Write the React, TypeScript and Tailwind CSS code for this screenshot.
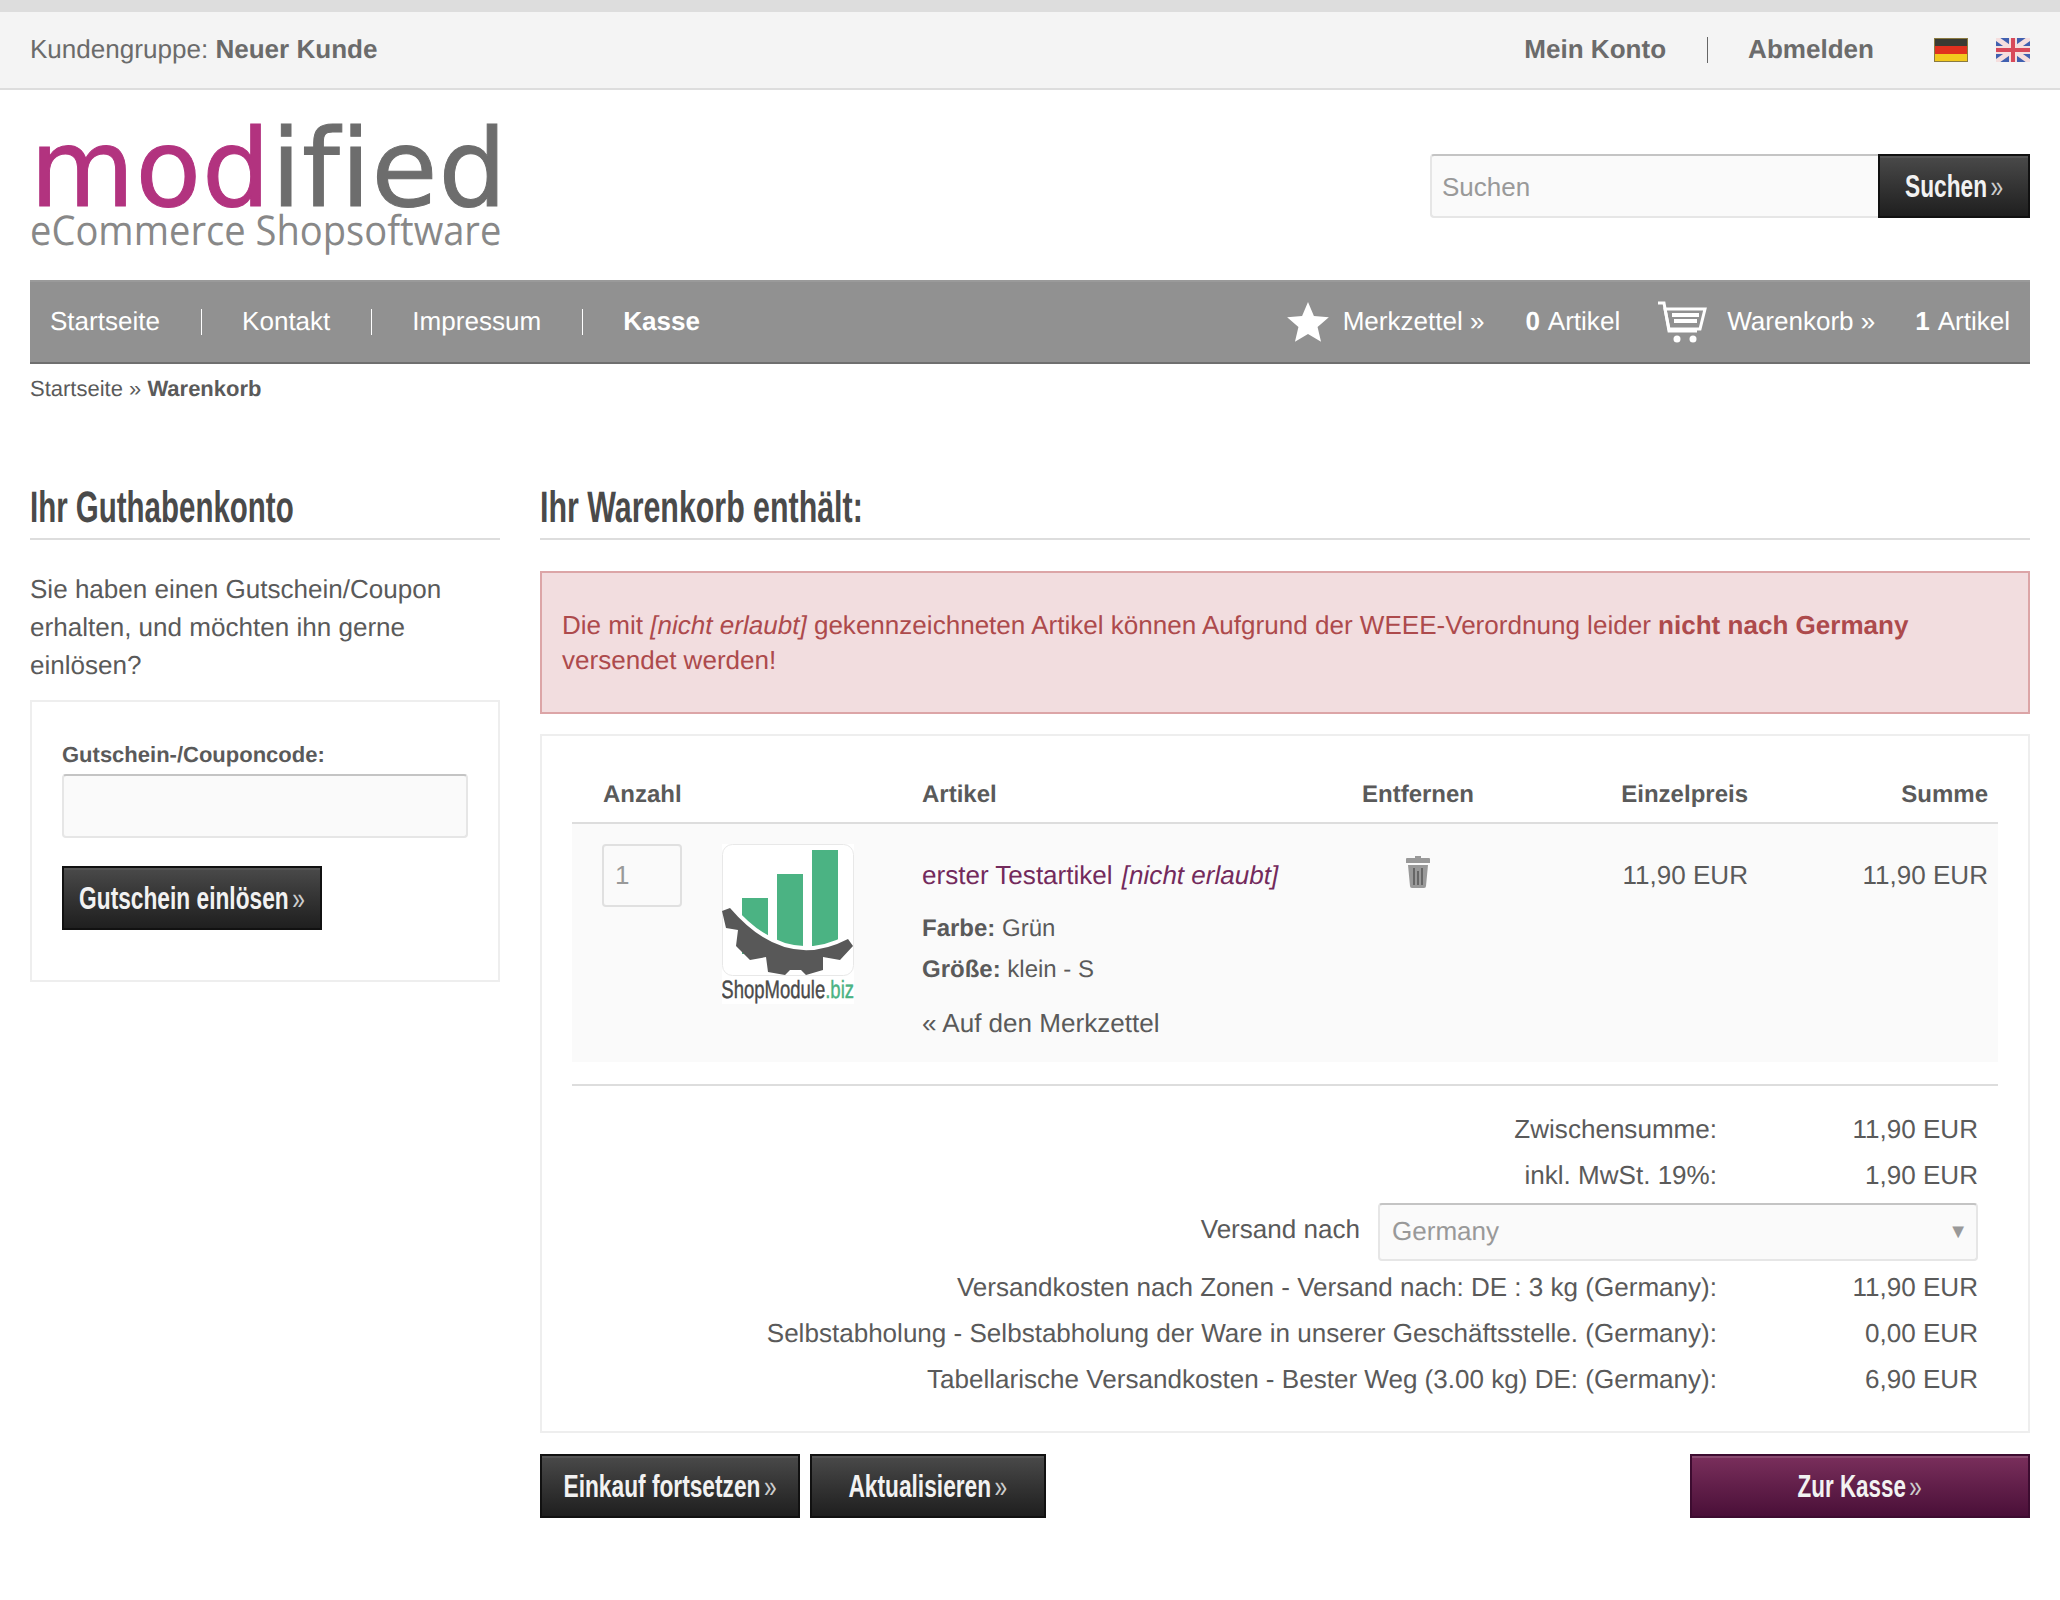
const DarkButton = ({ label, className = "" }: { label: string; className?: string }) => (
  <button
    className={`flex h-[64px] items-center justify-center overflow-hidden whitespace-nowrap border-2 border-[#111] bg-gradient-to-b from-[#4a4a4a] to-[#1f1f1f] text-[32px] font-bold text-[#f2f2f2] shadow-[inset_0_2px_0_#555] ${className}`}
  >
    <span className="inline-block shrink-0 scale-x-[0.71]">
      {label} <span className="-ml-1 font-normal text-[#ccc]">»</span>
    </span>
  </button>
);

const Sep = () => <span className="mr-[40px] ml-[41px] inline-block h-[26px] w-px bg-white" />;

const Heading = ({ label, scale }: { label: string; scale: string }) => (
  <h2 className="border-b-2 border-[#ddd] pb-[2px] text-[44px] leading-[56px] font-bold whitespace-nowrap text-[#4a4a4a]">
    <span className={`inline-block origin-left ${scale}`}>{label}</span>
  </h2>
);

const CartIcon = () => (
  <svg width="50" height="42" viewBox="0 0 50 42" fill="none" stroke="#fff">
    <path d="M1 2h6l5 28h28" strokeWidth="3" />
    <path d="M8 8h40l-5 20H12z" strokeWidth="3" />
    <path d="M15 14h27M17 20h23" strokeWidth="4" />
    <circle cx="20" cy="38" r="3.5" fill="#fff" stroke="none" />
    <circle cx="36" cy="38" r="3.5" fill="#fff" stroke="none" />
  </svg>
);

const StarIcon = () => (
  <svg width="42" height="40" viewBox="0 0 24 23" fill="#fff">
    <path d="M12 0l3.400 8 8.600.7-6.500 5.700 2 8.500-7.500-4.500-7.500 4.500 2-8.500L0 8.700l8.600-.7z" />
  </svg>
);

const TrashIcon = () => (
  <svg width="24" height="32" viewBox="0 0 24 32" fill="#999">
    <path d="M9 0h6v2h8a1 1 0 0 1 1 1v4H0V3a1 1 0 0 1 1-1h8z" />
    <path d="M2 9h20l-2 21a2 2 0 0 1-2 2H6a2 2 0 0 1-2-2z" />
    <path d="M8 12v17M12 15v14M16 12v17" stroke="#666" strokeWidth="2" />
  </svg>
);

const FlagDe = () => (
  <svg width="34" height="24" viewBox="0 0 34 24">
    <rect width="34" height="8" fill="#3a3a32" />
    <rect y="8" width="34" height="8" fill="#e0301e" />
    <rect y="16" width="34" height="8" fill="#f2c81e" />
    <rect x=".5" y=".5" width="33" height="23" fill="none" stroke="#8a7a40" />
  </svg>
);

const FlagUk = () => (
  <svg width="34" height="24" viewBox="0 0 34 24">
    <rect width="34" height="24" fill="#4060b0" />
    <path d="M0 0l34 24M34 0L0 24" stroke="#f5dede" strokeWidth="5" />
    <path d="M17 0v24M0 12h34" stroke="#f5dede" strokeWidth="8" />
    <path d="M17 0v24M0 12h34" stroke="#d8495a" strokeWidth="4" />
  </svg>
);

const ProductImage = () => (
  <div className="w-[132px] bg-white">
    <svg width="132" height="132" viewBox="0 0 132 132" className="block">
      <rect x=".5" y=".5" width="131" height="131" rx="10" fill="#fff" stroke="#e8e8e8" />
      <path d="M20 54h26v56H20zM55 30h26v80H55zM90 6h26v104H90z" fill="#4bb383" />
      <path d="M8 64Q63 128 126 95" fill="none" stroke="#fff" strokeWidth="8" />
      <path
        d="M0 67L8 64Q63 128 126 95L131 102L118 116L101 113V126L84 131L79 126H68L63 131L46 128L44 113L28 116L14 102L16 86L4 84z"
        fill="#585858"
      />
    </svg>
    <div className="flex h-[28px] justify-center overflow-hidden whitespace-nowrap text-[25px] leading-[28px] text-[#4a4a4a] [-webkit-text-stroke:0.4px]">
      <span className="inline-block shrink-0 scale-x-[0.74]">
        ShopModule<span className="text-[#4bb383]">.biz</span>
      </span>
    </div>
  </div>
);

const TotalRow = ({ label, value }: { label: string; value: string }) => (
  <div className="flex h-[46px] items-center justify-end">
    <span>{label}</span>
    <span className="w-[281px] pr-[20px] text-right">{value}</span>
  </div>
);

const columns = "grid grid-cols-[150px_200px_420px_152px_254px_250px]";

export default function App() {
  return (
    <div className="min-h-[1600px] bg-white text-[26.05px] text-[#5a5a5a] [text-rendering:geometricPrecision] font-['Liberation_Sans',Arial,sans-serif]">
      <div className="h-[12px] bg-[#ddd]" />
      {/* Top bar */}
      <div className="flex h-[78px] items-center border-b-2 border-[#ddd] bg-[#f4f4f4] px-[30px] text-[#6b6b6b]">
        <span>
          Kundengruppe: <b>Neuer Kunde</b>
        </span>
        <div className="ml-auto flex items-center">
          <b>Mein Konto</b>
          <span className="mr-[40px] ml-[41px] h-[26px] w-px bg-[#666]" />
          <b>Abmelden</b>
          <span className="ml-[60px]">
            <FlagDe />
          </span>
          <span className="ml-[28px]">
            <FlagUk />
          </span>
        </div>
      </div>

      {/* Logo + search */}
      <div className="flex h-[190px] items-start justify-between px-[30px]">
        <div className="mt-[36px] w-[436px]">
          <div className="h-[88px] origin-left scale-x-[0.993] whitespace-nowrap text-[108px] leading-[88px] tracking-[1px] text-[#6d6d6d] [-webkit-text-stroke:1px] font-['DejaVu_Sans',sans-serif]">
            <span className="text-[#b2337f]">mod</span>ified
          </div>
          <div className="origin-left scale-x-[0.93] whitespace-nowrap text-[41px] leading-[32px] text-[#888] font-['Open_Sans',sans-serif]">
            eCommerce Shopsoftware
          </div>
        </div>
        <div className="mt-[64px] flex h-[64px]">
          <input
            placeholder="Suchen"
            className="w-[448px] rounded-l border-2 border-r-0 border-[#e6e6e6] border-t-[#c4c4c4] bg-[#fafafa] px-[10px] pt-[2px] text-[26px] placeholder:text-[#999]"
          />
          <DarkButton label="Suchen" className="w-[152px]" />
        </div>
      </div>

      {/* Nav */}
      <div className="mx-[30px] flex h-[84px] items-center border-y-2 border-t-[#9a9a9a] border-b-[#6f6f6f] bg-[#919191] px-[20px] text-white">
        <span>Startseite</span>
        <Sep />
        <span>Kontakt</span>
        <Sep />
        <span>Impressum</span>
        <Sep />
        <b>Kasse</b>
        <div className="ml-auto flex items-center">
          <StarIcon />
          <span className="ml-[14px]">Merkzettel »</span>
          <span className="ml-[41px]">
            <b className="mr-[2px]">0</b> Artikel
          </span>
          <span className="ml-[37px]">
            <CartIcon />
          </span>
          <span className="ml-[20px]">Warenkorb »</span>
          <span className="ml-[40px]">
            <b className="mr-[2px]">1</b> Artikel
          </span>
        </div>
      </div>

      {/* Breadcrumb */}
      <div className="px-[30px] pt-[12px] text-[22px] leading-[26px]">
        Startseite » <b>Warenkorb</b>
      </div>

      <div className="mt-[78px] flex gap-[40px] px-[30px]">
        {/* Sidebar */}
        <div className="w-[470px] shrink-0">
          <Heading label="Ihr Guthabenkonto" scale="scale-x-[0.67]" />
          <p className="mt-[30px] leading-[38px]">
            Sie haben einen Gutschein/Coupon erhalten, und möchten ihn gerne einlösen?
          </p>
          <div className="mt-[16px] h-[282px] border-2 border-[#eee] px-[30px] pt-[39px]">
            <label className="block text-[22px] leading-[28px] font-bold">Gutschein-/Couponcode:</label>
            <input className="mt-[5px] h-[64px] w-full rounded border-2 border-[#e6e6e6] border-t-[#c4c4c4] bg-[#fafafa]" />
            <DarkButton label="Gutschein einlösen" className="mt-[28px] w-[260px]" />
          </div>
        </div>

        {/* Main */}
        <div className="min-w-0 flex-1">
          <Heading label="Ihr Warenkorb enthält:" scale="scale-x-[0.69]" />
          <div className="mt-[31px] h-[143px] border-2 border-[#dca5a7] bg-[#f2dddf] px-[20px] pt-[35px] leading-[35px] text-[#ad4a4c]">
            Die mit <i>[nicht erlaubt]</i> gekennzeichneten Artikel können Aufgrund der WEEE-Verordnung leider{" "}
            <b>nicht nach Germany</b> versendet werden!
          </div>

          {/* Cart box */}
          <div className="mt-[20px] h-[699px] border-2 border-[#eee] px-[30px] pt-[28px]">
            <div className={`${columns} h-[60px] items-center border-b-2 border-[#ddd] pt-[3px] text-[24px] font-bold`}>
              <span className="pl-[31px]">Anzahl</span>
              <span />
              <span>Artikel</span>
              <span className="text-center">Entfernen</span>
              <span className="text-right">Einzelpreis</span>
              <span className="pr-[10px] text-right">Summe</span>
            </div>
            <div className={`${columns} h-[238px] bg-[#fafafa]`}>
              <div className="pt-[20px] pl-[30px]">
                <input
                  defaultValue="1"
                  className="h-[63px] w-[80px] rounded-sm border-2 border-[#e0e0e0] bg-[#fafafa] px-[11px] text-[26px] text-[#999]"
                />
              </div>
              <div className="pt-[20px]">
                <ProductImage />
              </div>
              <div className="pt-[32px]">
                <div className="leading-[38px] text-[#732a5c]">
                  erster Testartikel <i className="ml-[2px]">[nicht erlaubt]</i>
                </div>
                <div className="mt-[15px] text-[24px] leading-[40px]">
                  <b>Farbe:</b> Grün
                </div>
                <div className="mt-[1px] text-[24px] leading-[40px]">
                  <b>Größe:</b> klein - S
                </div>
                <div className="mt-[14px] leading-[38px]">« Auf den Merkzettel</div>
              </div>
              <div className="flex justify-center pt-[32px]">
                <TrashIcon />
              </div>
              <div className="pt-[32px] text-right leading-[38px]">11,90 EUR</div>
              <div className="pt-[32px] pr-[10px] text-right leading-[38px]">11,90 EUR</div>
            </div>
            <div className="mt-[22px] border-t-2 border-[#ddd] pt-[21px]">
              <TotalRow label="Zwischensumme:" value="11,90 EUR" />
              <TotalRow label="inkl. MwSt. 19%:" value="1,90 EUR" />
              <div className="flex h-[66px] items-center justify-end pr-[20px]">
                <span className="mr-[18px] mb-[4px]">Versand nach</span>
                <div className="flex h-[58px] w-[600px] items-center justify-between rounded border-2 border-[#e6e6e6] border-t-[#c4c4c4] bg-[#fafafa] pr-[8px] pl-[12px] text-[#999]">
                  Germany
                  <span className="text-[20px]">▼</span>
                </div>
              </div>
              <TotalRow label="Versandkosten nach Zonen - Versand nach: DE : 3 kg (Germany):" value="11,90 EUR" />
              <TotalRow label="Selbstabholung - Selbstabholung der Ware in unserer Geschäftsstelle. (Germany):" value="0,00 EUR" />
              <TotalRow label="Tabellarische Versandkosten - Bester Weg (3.00 kg) DE: (Germany):" value="6,90 EUR" />
            </div>
          </div>

          {/* Actions */}
          <div className="mt-[21px] flex gap-[10px]">
            <DarkButton label="Einkauf fortsetzen" className="w-[260px]" />
            <DarkButton label="Aktualisieren" className="w-[236px]" />
            <button className="ml-auto flex h-[64px] w-[340px] items-center justify-center border-2 border-[#3d0c30] bg-gradient-to-b from-[#7a2f5c] to-[#4a0f38] text-[32px] font-bold text-[#f2f2f2] shadow-[inset_0_2px_0_#8a4a70]">
              <span className="inline-block scale-x-[0.7]">
                Zur Kasse <span className="-ml-1 font-normal text-[#ccc]">»</span>
              </span>
            </button>
          </div>
        </div>
      </div>
    </div>
  );
}
